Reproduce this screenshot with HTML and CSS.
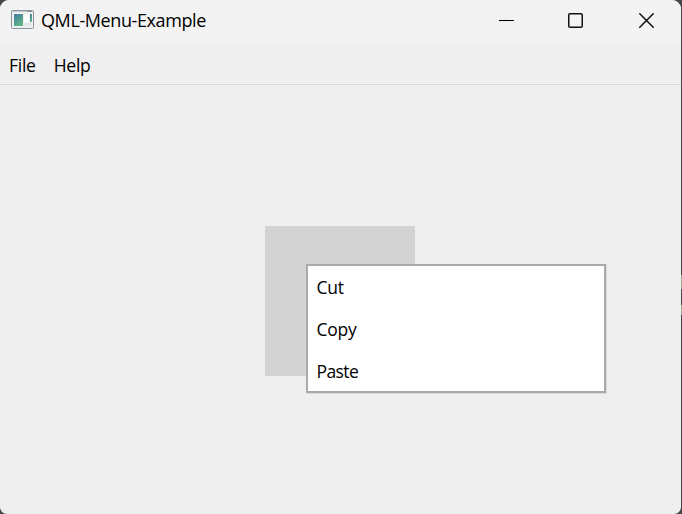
FILE: index.html
```html
<!DOCTYPE html>
<html lang="en">
<head>
<meta charset="utf-8">
<title>QML-Menu-Example</title>
<link rel="stylesheet" href="styles.css">
</head>
<body>
<div class="window">
  <header class="titlebar">
    <svg class="app-icon" width="23" height="20" viewBox="0 0 23 20">
      <defs>
        <linearGradient id="pane" x1="0" y1="0" x2=".6" y2="1">
          <stop offset="0" stop-color="#417aa6"/>
          <stop offset="1" stop-color="#5fb585"/>
        </linearGradient>
      </defs>
      <rect x=".5" y=".5" width="22" height="18" rx="1" fill="#eff1f2" stroke="#8b949c"/>
      <path d="M1 1.5h21" stroke="#c3c9ce"/>
      <path d="M16 1.5h5" stroke="#8b949c"/>
      <rect x="3" y="4" width="9" height="12" fill="url(#pane)"/>
      <rect x="13" y="4" width="5" height="8" fill="#fff"/>
      <rect x="14" y="13" width="7" height="3" fill="#e2e6e6"/>
      <rect x="19" y="4" width="2" height="8" fill="url(#pane)"/>
    </svg>
    <span class="title">QML-Menu-Example</span>
    <svg class="controls" width="155" height="16" viewBox="0 0 155 16" fill="none">
      <path d="M0 7.5h15" stroke="#000" stroke-width="1.1"/>
      <rect x="69.75" y=".75" width="13.5" height="13.5" rx="1.3" stroke="#111" stroke-width="1.5"/>
      <path d="M140.3.3l14.4 14.4M154.7.3l-14.4 14.4" stroke="#111" stroke-width="1.5"/>
    </svg>
  </header>
  <nav class="menubar">
    <span class="file">File</span>
    <span class="help">Help</span>
  </nav>
  <main class="content">
    <div class="area"></div>
    <div class="context-menu">
      <div class="item cut">Cut</div>
      <div class="item copy">Copy</div>
      <div class="item paste">Paste</div>
    </div>
  </main>
</div>
<i class="edge-mark edge-mark-long"></i>
<i class="edge-mark edge-mark-short"></i>
</body>
</html>
```
FILE: styles.css
```css
* { box-sizing: border-box; }
body {
  margin: 0;
  width: 682px;
  height: 514px;
  overflow: hidden;
  background: #47474b;
  font-family: "Open Sans", "Noto Sans", sans-serif;
  font-size: 17.5px;
  letter-spacing: -.25px;
  color: #000;
}
.window {
  width: 681px;
  height: 514px;
  display: flex;
  flex-direction: column;
  overflow: hidden;
  border-radius: 9px 9px 7px 7px;
  background: #efefef;
}
.titlebar {
  display: flex;
  align-items: center;
  height: 43px;
  padding: 0 27px 3px 11px;
  background: #f3f3f3;
}
.title {
  margin: 0 0 0 7px;
  line-height: 24px;
  font-size: 18px;
  letter-spacing: -.4px;
}
.controls { margin: 1px 0 0 auto; position: relative; top: .5px; }
.menubar {
  display: flex;
  gap: 18px;
  height: 42px;
  padding: 10px 9px 0;
  line-height: 24px;
  border-bottom: 1px solid #d7d7d7;
}
.content { position: relative; flex: 1; }
.area {
  width: 150px;
  height: 150px;
  margin: 141px 0 0 265px;
  background: #d3d3d3;
}
.context-menu {
  position: absolute;
  left: 306px;
  top: 179px;
  width: 300px;
  height: 129px;
  border: 2px solid #aaa;
  background: #fff;
  box-shadow: 1px 1px 0 #dadada;
}
.item {
  height: 42px;
  padding: 0 0 0 8.5px;
  line-height: 42px;
}
.paste { letter-spacing: -.6px; }
.edge-mark {
  position: absolute;
  left: 681px;
  width: 1px;
  background: #a5a58e;
}
.edge-mark-long { top: 275px; height: 14px; }
.edge-mark-short { top: 305px; height: 10px; }
```
